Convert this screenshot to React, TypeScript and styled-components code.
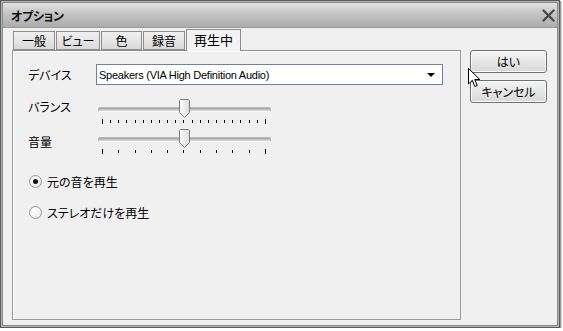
import React from "react";
import styled, { createGlobalStyle } from "styled-components";

const GlobalStyle = createGlobalStyle`
  html, body {
    margin: 0;
    padding: 0;
    background: #ffffff;
  }
  body {
    font-family: "Noto Sans CJK JP", "Liberation Sans", sans-serif;
    font-size: 12px;
    color: #000;
  }
`;

const Window = styled.div`
  position: relative;
  width: 558px;
  height: 326px;
  border: 1px solid #5c5c5c;
  box-shadow: inset 0 0 0 1px #b4b4b4, inset 0 0 0 2px #8a8a8a, 1px 1px 0 #9c9c9c, 2px 2px 0 #d0d0d0;
  background: #f0f0f0;
  display: flex;
  flex-direction: column;
  font-feature-settings: "palt";
  overflow: hidden;
`;

const TitleBar = styled.div`
  height: 24px;
  flex: none;
  margin: 2px 2px 0 2px;
  background: linear-gradient(#e2e2e2, #c4c4c4 45%, #acacac);
  border-bottom: 1px solid #9a9a9a;
  display: flex;
  align-items: center;
  justify-content: space-between;
  padding: 0 2px 0 8px;
`;

const Title = styled.div`
  font-weight: bold;
  font-size: 12px;
  letter-spacing: -0.3px;
  color: #111;
`;

const CloseIcon = styled.svg`
  width: 13px;
  height: 13px;
`;

const Body = styled.div`
  flex: 1;
  display: flex;
  padding: 2px 0 0 11px;
`;

const LeftColumn = styled.div`
  width: 449px;
  display: flex;
  flex-direction: column;
`;

const TabStrip = styled.div`
  height: 20px;
  display: flex;
  align-items: flex-end;
  padding-left: 1px;
  position: relative;
  z-index: 1;
`;

const Tab = styled.div<{ $active?: boolean; $w: number }>`
  box-sizing: border-box;
  width: ${({ $w }) => $w}px;
  height: ${({ $active }) => ($active ? "22px" : "19px")};
  margin-bottom: ${({ $active }) => ($active ? "-1px" : "0")};
  margin-right: 1px;
  border: 1px solid #8e8e8e;
  border-bottom: ${({ $active }) => ($active ? "none" : "1px solid #8e8e8e")};
  background: ${({ $active }) =>
    $active ? "#f2f2f2" : "linear-gradient(#f0f0f0, #dadada)"};
  display: flex;
  align-items: center;
  justify-content: center;
  font-size: ${({ $active }) => ($active ? "13px" : "12px")};
  padding-bottom: ${({ $active }) => ($active ? "3px" : "0")};
`;

const Panel = styled.div`
  box-sizing: border-box;
  height: 270px;
  border: 1px solid #9a9a9a;
  border-top-color: #8e8e8e;
  box-shadow: inset 1px 1px 0 #ffffff;
  background: #f0f0f0;
  padding: 13px 18px 0 15px;
`;

const Grid = styled.div`
  display: grid;
  grid-template-columns: 68px 1fr;
  align-items: start;
`;

const Label = styled.div<{ $top: number }>`
  margin-top: ${({ $top }) => $top}px;
  line-height: 14px;
`;

const Combo = styled.div`
  box-sizing: border-box;
  width: 347px;
  height: 21px;
  border: 1px solid #6e80a8;
  background: #fff;
  display: flex;
  align-items: center;
  justify-content: space-between;
  padding: 0 7px 0 2px;
  font-family: "Liberation Sans", sans-serif;
  font-size: 11px;
  letter-spacing: -0.25px;
`;

const ArrowDown = styled.div`
  width: 0;
  height: 0;
  border-left: 4px solid transparent;
  border-right: 4px solid transparent;
  border-top: 4px solid #000;
`;

const SliderBox = styled.div<{ $top: number }>`
  position: relative;
  width: 176px;
  height: 28px;
  margin-top: ${({ $top }) => $top}px;
  margin-left: 1px;
`;

const Track = styled.div`
  position: absolute;
  left: 1px;
  right: 2px;
  top: 8px;
  height: 3px;
  border-radius: 2px;
  background: linear-gradient(#9e9e9e, #e2e2e2);
  border: 1px solid #b8b8b8;
  border-bottom-color: #fafafa;
`;

const Thumb = styled.svg`
  position: absolute;
  top: 0;
  width: 11px;
  height: 19px;
  margin-left: -5px;
`;

const Ticks = styled.div`
  position: absolute;
  left: 5px;
  right: 7px;
  top: 21px;
  display: flex;
  justify-content: space-between;
  align-items: flex-start;
`;

const Tick = styled.div<{ $long?: boolean }>`
  width: 1px;
  height: ${({ $long }) => ($long ? "5px" : "3px")};
  margin-top: ${({ $long }) => ($long ? "-1px" : "0")};
  background: #000;
`;

const RadioList = styled.div`
  display: flex;
  flex-direction: column;
  gap: 17px;
  margin-top: 17px;
  margin-left: 1px;
`;

const RadioRow = styled.div`
  display: flex;
  align-items: center;
  gap: 5px;
  height: 14px;
`;

const RadioCircle = styled.div<{ $checked?: boolean }>`
  box-sizing: border-box;
  width: 13px;
  height: 13px;
  border-radius: 50%;
  border: 1px solid #9a9a9a;
  background: radial-gradient(circle at 40% 35%, #ffffff, #e4e4e4);
  display: flex;
  align-items: center;
  justify-content: center;
  &::after {
    content: "";
    display: ${({ $checked }) => ($checked ? "block" : "none")};
    width: 5px;
    height: 5px;
    border-radius: 50%;
    background: #111;
  }
`;

const RightColumn = styled.div`
  display: flex;
  flex-direction: column;
  gap: 7px;
  margin-left: 9px;
  padding-top: 20px;
`;

const Button = styled.div`
  box-sizing: border-box;
  width: 77px;
  height: 23px;
  border: 1px solid #707070;
  border-radius: 3px;
  background: linear-gradient(#f4f4f4, #e6e6e6 50%, #d8d8d8);
  box-shadow: inset 0 0 0 1px #fbfbfb;
  display: flex;
  align-items: center;
  justify-content: center;
  font-size: 12px;
`;

const Cursor = styled.svg`
  position: absolute;
  left: 467px;
  top: 67px;
  width: 13px;
  height: 20px;
`;

const Slider = ({ top, ticks, value }: { top: number; ticks: number; value: number }) => (
  <SliderBox $top={top}>
    <Track />
    <Ticks>
      {Array.from({ length: ticks }).map((_, i) => (
        <Tick key={i} $long={i === 0 || i === ticks - 1} />
      ))}
    </Ticks>
    <Thumb viewBox="0 0 11 19" style={{ left: `${5 + value * 164}px` }}>
      <defs>
        <linearGradient id="thumbFill" x1="0" x2="1">
          <stop offset="0" stopColor="#fdfdfd" />
          <stop offset="1" stopColor="#dcdcdc" />
        </linearGradient>
      </defs>
      <path d="M1.5 0.5 H9.5 L10.5 1.5 V13.5 L5.5 18.5 L0.5 13.5 V1.5 Z" fill="url(#thumbFill)" stroke="#7a7a7a" />
    </Thumb>
  </SliderBox>
);

const tabs = [
  { label: "一般", w: 42 },
  { label: "ビュー", w: 44 },
  { label: "色", w: 41 },
  { label: "録音", w: 42 },
  { label: "再生中", w: 55, active: true },
];

export default function App() {
  return (
    <>
      <GlobalStyle />
      <Window>
        <TitleBar>
          <Title>オプション</Title>
          <CloseIcon viewBox="0 0 13 13">
            <path d="M1.5 1.5 L11.5 11.5 M11.5 1.5 L1.5 11.5" stroke="#4a4a4a" strokeWidth="2.4" strokeLinecap="round" />
          </CloseIcon>
        </TitleBar>
        <Body>
          <LeftColumn>
            <TabStrip>
              {tabs.map((t) => (
                <Tab key={t.label} $w={t.w} $active={t.active}>
                  {t.label}
                </Tab>
              ))}
            </TabStrip>
            <Panel>
              <Grid>
                <Label $top={4}>デバイス</Label>
                <Combo>
                  <span>Speakers (VIA High Definition Audio)</span>
                  <ArrowDown />
                </Combo>
                <Label $top={15}>バランス</Label>
                <Slider top={14} ticks={21} value={0.5} />
                <Label $top={8}>音量</Label>
                <Slider top={2} ticks={11} value={0.5} />
              </Grid>
              <RadioList>
                <RadioRow>
                  <RadioCircle $checked />
                  <span>元の音を再生</span>
                </RadioRow>
                <RadioRow>
                  <RadioCircle />
                  <span>ステレオだけを再生</span>
                </RadioRow>
              </RadioList>
            </Panel>
          </LeftColumn>
          <RightColumn>
            <Button>はい</Button>
            <Button>キャンセル</Button>
          </RightColumn>
        </Body>
        <Cursor viewBox="0 0 13 20">
          <path d="M0.5 0.5 V16 L4.3 12.3 L6.8 18.5 L9.2 17.5 L6.7 11.5 L11.8 11.5 Z" fill="#fff" stroke="#000" strokeWidth="1" strokeLinejoin="round" />
        </Cursor>
      </Window>
    </>
  );
}
